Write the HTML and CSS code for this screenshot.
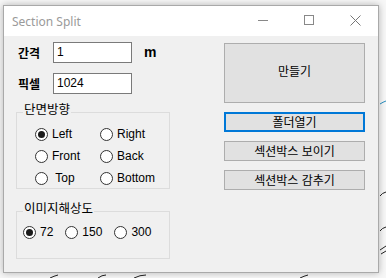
FILE: index.html
```html
<!DOCTYPE html>
<html lang="ko">
<head>
  <meta charset="UTF-8">
  <title>Section Split</title>
  <link rel="stylesheet" href="styles.css">
</head>
<body>

<svg class="backdrop" width="386" height="278" viewBox="0 0 386 278">
  <path d="M380 104 q3 -2 6 -3" stroke="#2a8fc0" fill="none"/>
  <path d="M380 196 q2 -3 6 -4" stroke="#222" fill="none"/>
  <path d="M380 231 q2 -3 6 -4" stroke="#222" fill="none"/>
  <path d="M380 250 l6 -4 M381 254 l5 -3" stroke="#222" fill="none"/>
  <path d="M50 278 q4 -2 8 -3 M98 278 q4 -3 8 -3 M134 278 q6 -3 12 -3 M300 278 q4 -2 8 -3" stroke="#222" fill="none"/>
</svg>

<div class="window">
  <div class="titlebar">
    <span class="title">Section Split</span>
    <div class="controls">
      <span class="ctl"><span class="min"></span></span>
      <span class="ctl"><span class="max"></span></span>
      <span class="ctl">
        <svg width="11" height="11" viewBox="0 0 11 11"><path d="M0.5 0.5 L10.5 10.5 M10.5 0.5 L0.5 10.5" stroke="#777" stroke-width="1"/></svg>
      </span>
    </div>
  </div>

  <div class="client">
    <div class="left-col">
      <div class="field">
        <span class="label">간격</span>
        <span class="textbox">1</span>
        <span class="unit">m</span>
      </div>
      <div class="field second">
        <span class="label">픽셀</span>
        <span class="textbox">1024</span>
      </div>

      <div class="group">
        <span class="legend">단면방향</span>
        <div class="radio-grid">
          <label class="radio"><span class="dot checked"></span>Left</label>
          <label class="radio"><span class="dot"></span>Right</label>
          <label class="radio"><span class="dot"></span>Front</label>
          <label class="radio"><span class="dot"></span>Back</label>
          <label class="radio"><span class="dot"></span>&nbsp;Top</label>
          <label class="radio"><span class="dot"></span>Bottom</label>
        </div>
      </div>

      <div class="group res">
        <span class="legend">이미지해상도</span>
        <div class="radio-row">
          <label class="radio"><span class="dot checked"></span>72</label>
          <label class="radio"><span class="dot"></span>150</label>
          <label class="radio"><span class="dot"></span>300</label>
        </div>
      </div>
    </div>

    <div class="right-col">
      <button class="btn big">만들기</button>
      <button class="btn focus">폴더열기</button>
      <button class="btn">섹션박스 보이기</button>
      <button class="btn">섹션박스 감추기</button>
    </div>
  </div>
</div>

</body>
</html>
```

FILE: styles.css
```css
body {
  margin: 0;
  width: 386px;
  height: 278px;
  overflow: hidden;
  background-color: #f7f7f7;
  font-family: "Liberation Sans", "Noto Sans CJK KR", sans-serif;
  font-size: 12px;
  color: #000;
}
.backdrop {
  position: absolute;
  left: 0;
  top: 0;
}
.window {
  position: relative;
  margin: 5px 0 0 3px;
  width: 374px;
  height: 266px;
  border: 1px solid #a9a9a9;
  background-color: #f0f0f0;
  box-shadow: 0 0 7px rgba(0, 0, 0, 0.28);
}
.titlebar {
  height: 30px;
  background-color: #fff;
  display: flex;
  align-items: center;
}
.title {
  padding-left: 8px;
  font-family: "Noto Sans", sans-serif;
  font-size: 12px;
  color: #9a9a9a;
  flex: 1;
}
.controls {
  display: flex;
  height: 30px;
}
.ctl {
  width: 46px;
  height: 30px;
  display: flex;
  align-items: center;
  justify-content: center;
}
.min {
  width: 10px;
  height: 1px;
  background-color: #888;
  margin-top: -2px;
}
.max {
  width: 8px;
  height: 8px;
  border: 1px solid #888;
  margin-top: -2px;
}
.ctl svg {
  margin-top: -2px;
}
.client {
  display: flex;
  padding: 6px 0 0 12px;
}
.left-col {
  width: 154px;
}
.field {
  display: flex;
  align-items: center;
  height: 20px;
}
.field.second {
  margin-top: 11px;
}
.label {
  width: 35px;
  padding-left: 2px;
  font-weight: bold;
  font-size: 12px;
}
.textbox {
  box-sizing: border-box;
  width: 79px;
  height: 21px;
  border: 1px solid #7a7a7a;
  background-color: #fff;
  padding: 2px 3px;
  line-height: 15px;
}
.unit {
  margin-left: 12px;
  font-weight: bold;
  font-size: 14px;
}
.group {
  margin-top: 19px;
  border: 1px solid #dcdcdc;
  padding-bottom: 1px;
}
.group.res {
  margin-top: 22px;
  padding-bottom: 17px;
}
.legend {
  display: table;
  margin: -10px 0 0 6px;
  padding: 0 1px;
  line-height: 14px;
  font-size: 12.5px;
  background-color: #f0f0f0;
}
.radio-grid {
  display: grid;
  grid-template-columns: 65px 60px;
  row-gap: 4px;
  margin-top: 8px;
  padding-left: 18px;
}
.radio-row {
  display: flex;
  gap: 12px;
  margin-top: 7px;
  padding-left: 6px;
}
.radio {
  display: flex;
  align-items: center;
  height: 18px;
  gap: 4px;
}
.dot {
  box-sizing: border-box;
  width: 13px;
  height: 13px;
  border: 1px solid #333;
  border-radius: 50%;
  background-color: #fff;
  display: flex;
  align-items: center;
  justify-content: center;
}
.dot.checked::after {
  content: "";
  width: 7px;
  height: 7px;
  border-radius: 50%;
  background-color: #1a1a1a;
}
.right-col {
  margin-left: 54px;
  width: 141px;
  display: flex;
  flex-direction: column;
  gap: 9px;
  padding-top: 1px;
}
.btn {
  box-sizing: border-box;
  height: 20px;
  padding: 0;
  border: 1px solid #adadad;
  background-color: #e1e1e1;
  font-family: "Noto Sans CJK KR", sans-serif;
  font-size: 12px;
  color: #000;
  line-height: 16px;
}
.btn.big {
  height: 60px;
  padding-bottom: 4px;
}
.btn.focus {
  border: 2px solid #0078d7;
}
```
